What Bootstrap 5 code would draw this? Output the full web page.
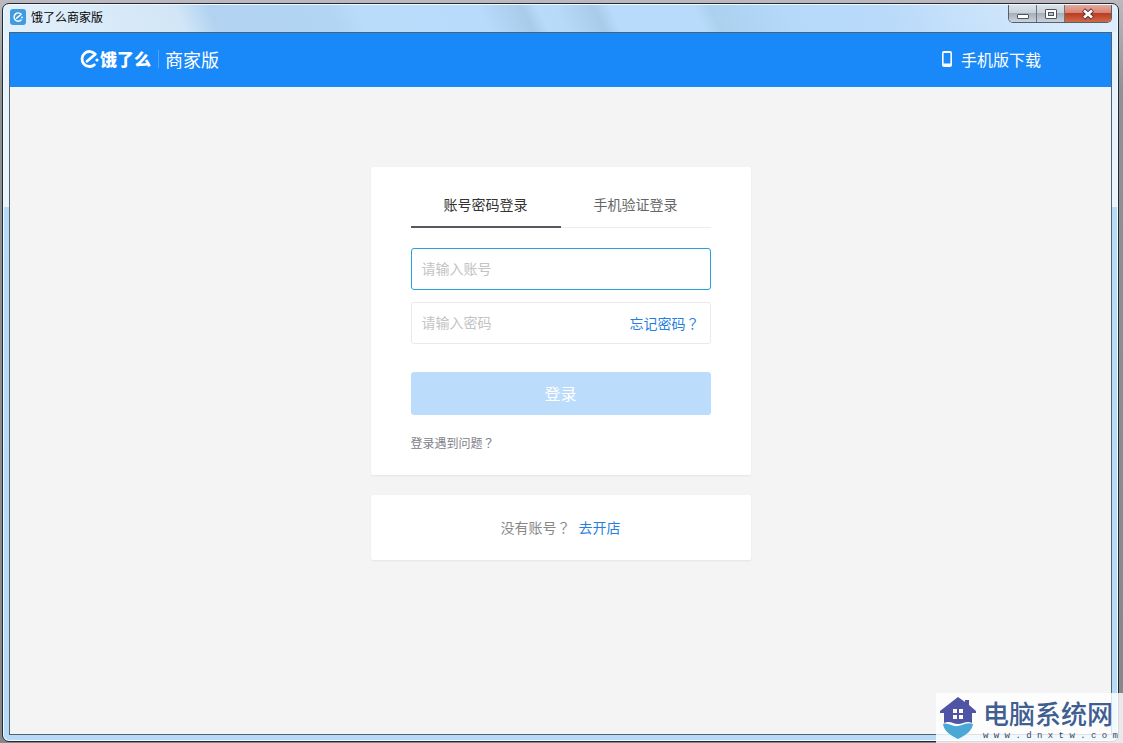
<!DOCTYPE html>
<html lang="zh-CN">
<head>
<meta charset="utf-8">
<meta name="viewport" content="width=device-width, initial-scale=1">
<title>饿了么商家版</title>
<link rel="stylesheet" href="https://cdn.jsdelivr.net/npm/bootstrap@5.3.0/dist/css/bootstrap.min.css">
<style>
  body { font-family: "Noto Sans CJK SC", sans-serif; font-size: 14px; line-height: 20px; background: linear-gradient(#bdb9bf, #8f9193 12%, #858789); padding: 3px 4px 1px 2px; }
  a { text-decoration: none; }
  .app-window { border: 1px solid #1e2a36; border-radius: 7px; padding: 0 6px 6px; box-shadow: inset 0 0 0 1px #f2faff;
    background: linear-gradient(#e4f1fc, #ebf4fc 203px, transparent 203px) 0 0 / 7px 100% no-repeat, linear-gradient(#e4f1fc, #ebf4fc 203px, transparent 203px) 100% 0 / 7px 100% no-repeat, #b7daf6; }
  .title-bar { height: 27px; margin: 1px -5px 0; padding-left: 6px; border-radius: 6px 6px 0 0; color: #000; font-size: 12px;
    background: linear-gradient(65deg, #e2f0fb 0, #d2e6f7 165px, #b1d3f1 195px, #b2d5f3 305px, #badcfb 330px, #b9dbfb 440px, #a8cbea 480px, #b9dbfa 494px, #b8daf9 510px, #a9cbea 545px, #b9dbfb 560px, #b9dbfb 635px, #acd1ef 650px, #b5d9f9 720px, #badafa 810px, #d6eafb 960px, #dfeefb); }
  .title-text { line-height: 16px; margin-left: 5px; }
  .win-buttons { height: 18px; margin-right: 5px; border: 1px solid #56606b; border-top: 0; border-radius: 0 0 5px 5px; overflow: hidden; }
  .win-buttons button { border: 0; border-right: 1px solid #69737d; width: 28px; padding: 0; line-height: 0; background: linear-gradient(#dbe2e9, #c9d0d8 48%, #a7b0ba 50%, #c9d3dd); }
  .win-buttons .win-close { width: 46px; border: 0; background: linear-gradient(#e5a99b, #d6836f 48%, #bd3c22 50%, #cf6a48); }
  .win-body { border: 1px solid #4d6272; background: #f4f4f4; }
  .brand-bar { height: 54px; padding: 0 70px 2px; background: #1989fa; color: #fff; }
  .brand-name { font-size: 17px; font-weight: 900; }
  .brand-edition { font-size: 18px; margin-left: 6px; }
  .brand-rule { width: 1px; height: 18px; background: #4ba3fb; margin-left: 7px; }
  .phone-link { font-size: 16px; color: #fff; gap: 8px; }
  .login-area { width: 100%; max-width: 380px; padding-top: 80px; gap: 20px; }
  .panel { background: #fff; border-radius: 2px; box-shadow: 0 1px 2px #e4e4e4; }
  .login-panel { padding: 16px 40px 22px; }
  .login-tabs button { flex: 1; height: 45px; border: 0; border-bottom: 1px solid #ececee; background: none; color: #666; padding: 0 0 2px; }
  .login-tabs button.active { border-bottom: 2px solid #59575e; color: #333; }
  .field { height: 42px; border: 1px solid #e9e9ea; border-radius: 3px; padding: 0 10px 2px; font-size: 14px; box-shadow: none !important; }
  .field::placeholder { color: #c3c3c3; opacity: 1; }
  .field-user { border-color: #26a2da; margin: 20px 0 12px; }
  .field-group { border: 1px solid #e9e9ea; border-radius: 3px; padding-right: 10px; height: 42px; }
  .field-group .field { border: 0; height: 40px; }
  .blue-link { color: #287fe0; white-space: nowrap; }
  .ask { font-family: "Noto Sans CJK TC", sans-serif; }
  .login-btn { height: 43px; margin: 28px 0 18px; border: 0; border-radius: 3px; background: #bbdcfb !important; color: #fff; font-size: 16px; padding: 0 0 2px; }
  .help-link { font-size: 12px; color: #81818b; }
  .join-panel { height: 65px; color: #888; gap: 8px; padding-bottom: 2px; }
  .site-mark { position: absolute; right: 0; bottom: 0; width: 187px; height: 50px; background: rgba(255,255,255,.82); padding-left: 4px; gap: 7px; }
  .site-name { font-size: 26px; line-height: 36px; font-weight: 500; color: #3f5e91; }
  .site-host { font: 400 9px/10px "Liberation Mono", monospace; color: #3b4563; white-space: nowrap; }
</style>
</head>
<body class="min-vh-100 d-flex flex-column position-relative">
<div class="app-window flex-grow-1 d-flex flex-column">
  <div class="title-bar d-flex justify-content-between align-items-start">
    <div class="d-flex align-items-center pt-1">
      <svg width="16" height="16" viewBox="0 0 16 16" aria-hidden="true"><rect width="16" height="16" rx="3" fill="#419be0"/><path d="M11.2 5.200A4.100 4.100 0 1 0 11.100 11M6.500 9.200l4.700-4" fill="none" stroke="#fff" stroke-width="1.500" stroke-linecap="round"/><circle cx="12" cy="8.400" r=".9" fill="#fff"/></svg>
      <span class="title-text">饿了么商家版</span>
    </div>
    <div class="win-buttons d-flex">
      <button type="button" aria-label="最小化"><svg width="14" height="14" viewBox="0 0 14 14"><rect x="1.500" y="7.500" width="11" height="4" rx=".5" fill="#fff" stroke="#4a5560"/></svg></button>
      <button type="button" aria-label="最大化"><svg width="14" height="14" viewBox="0 0 14 14"><rect x="1.500" y="2.500" width="11" height="9" rx=".5" fill="#fff" stroke="#4a5560"/><rect x="4.500" y="5.500" width="5" height="3" fill="#b9c4cf" stroke="#4a5560"/></svg></button>
      <button type="button" class="win-close" aria-label="关闭"><svg width="14" height="14" viewBox="0 0 14 14"><path d="M2.500 3l9 8m0-8l-9 8" stroke="#5b3335" stroke-width="4.400"/><path d="M3 3.500l8 7m0-7l-8 7" stroke="#fff" stroke-width="2.600"/></svg></button>
    </div>
  </div>
  <div class="win-body flex-grow-1 d-flex flex-column">
    <header class="brand-bar d-flex align-items-center justify-content-between">
      <div class="d-flex align-items-center">
        <svg width="20" height="20" viewBox="0 0 20 20" aria-hidden="true"><path d="M7 12.300L15.300 5.200A7.500 7.500 0 1 0 14.300 15.800" fill="none" stroke="#fff" stroke-width="2.800" stroke-linejoin="round" stroke-linecap="round"/><circle cx="17" cy="11" r="1.600" fill="#fff"/></svg>
        <span class="brand-name">饿了么</span>
        <span class="brand-rule"></span>
        <span class="brand-edition">商家版</span>
      </div>
      <a href="#" class="phone-link d-flex align-items-center">
        <svg width="12" height="16" viewBox="0 0 12 16" aria-hidden="true"><path fill="#fff" fill-rule="evenodd" d="M3 0h6a2 2 0 0 1 2 2v12a2 2 0 0 1-2 2H3a2 2 0 0 1-2-2V2a2 2 0 0 1 2-2zm-.4 2v10.500h6.800V2z"/></svg>
        <span>手机版下载</span>
      </a>
    </header>
    <main class="login-area d-flex flex-column mx-auto">
      <form class="panel login-panel">
        <div class="login-tabs d-flex align-items-stretch">
          <button type="button" class="active">账号密码登录</button>
          <button type="button">手机验证登录</button>
        </div>
        <input type="text" class="form-control field field-user" placeholder="请输入账号" aria-label="账号">
        <div class="field-group d-flex align-items-center">
          <input type="password" class="form-control field" placeholder="请输入密码" aria-label="密码">
          <a href="#" class="blue-link">忘记密码<span class="ask" lang="zh-TW">？</span></a>
        </div>
        <button type="submit" class="btn login-btn w-100">登录</button>
        <a href="#" class="help-link d-block">登录遇到问题<span class="ask" lang="zh-TW">？</span></a>
      </form>
      <div class="panel join-panel d-flex align-items-center justify-content-center">
        <span>没有账号<span class="ask" lang="zh-TW">？</span></span><a href="#" class="blue-link">去开店</a>
      </div>
    </main>
  </div>
</div>
<div class="site-mark d-flex align-items-center">
  <svg width="36" height="42" viewBox="0 0 36 42" aria-hidden="true"><path fill="#5054a5" d="M18 0l7 5V3h4v5l7 6v2h-4v10c-5-3-9 1-14 1s-8-4-14-1V16H0v-2z"/><path fill="#fff" d="M13 12h4v4h-4zm6 0h4v4h-4zm-6 6h4v4h-4zm6 0h4v4h-4z"/><path fill="#49a8d6" d="M3 27c5-2 9 3 15 2s9-4 15-2c-1 7-7 11-15 15C10 38 4 34 3 27z"/></svg>
  <div><div class="site-name">电脑系统网</div><div class="site-host">w w w . d n x t w . c o m</div></div>
</div>
<script src="https://cdn.jsdelivr.net/npm/bootstrap@5.3.0/dist/js/bootstrap.bundle.min.js"></script>
</body>
</html>
